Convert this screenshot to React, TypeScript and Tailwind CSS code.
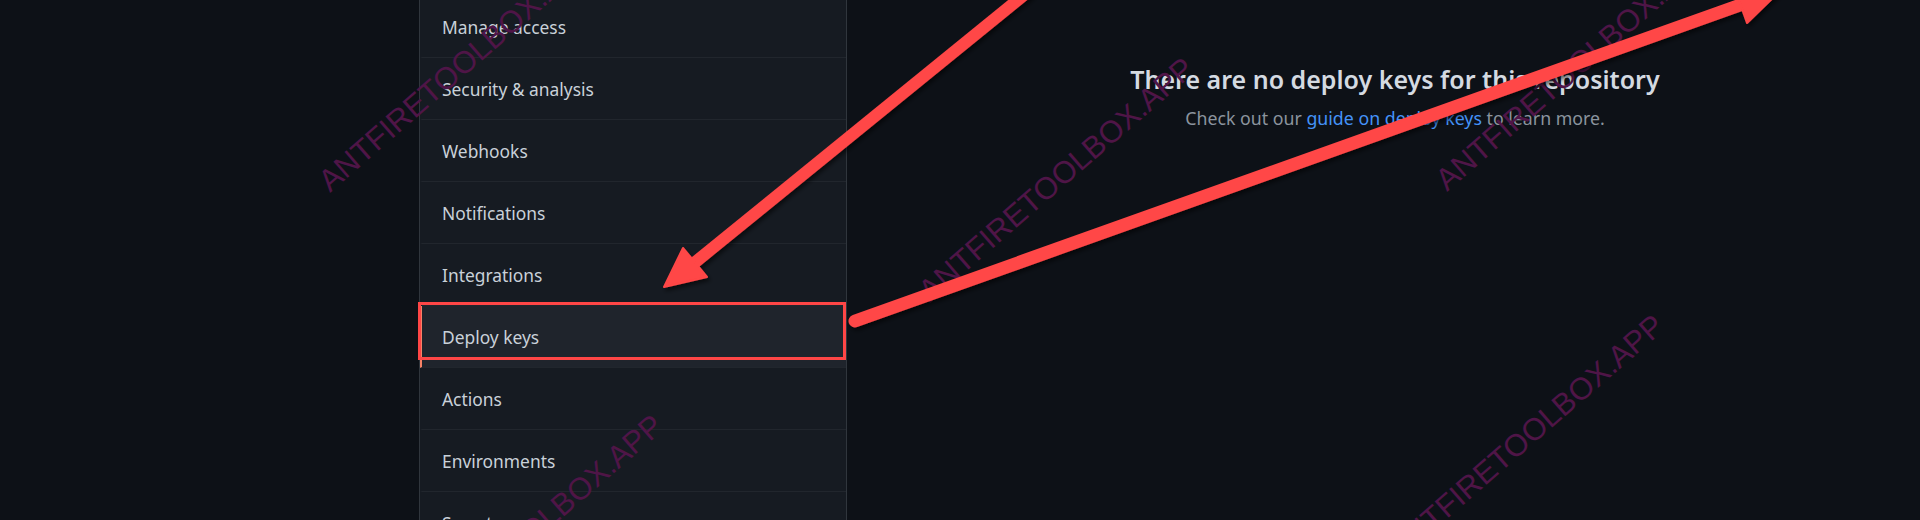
import React from "react";

const items = [
  "Manage access",
  "Security & analysis",
  "Webhooks",
  "Notifications",
  "Integrations",
  "Deploy keys",
  "Actions",
  "Environments",
  "Secrets",
];

function Watermark({ className }: { className: string }) {
  return (
    <span
      className={`pointer-events-none absolute whitespace-nowrap font-['Liberation_Sans',Arial,sans-serif] text-[31px] leading-none text-[#4f1547] origin-[0_26px] -rotate-[41deg] ${className}`}
    >
      ANTFIRETOOLBOX.APP
    </span>
  );
}

export default function App() {
  return (
    <div className="relative flex h-[520px] w-[1920px] overflow-hidden bg-[#0d1117] font-['Noto_Sans',sans-serif]">
      <div className="w-[419px] shrink-0" />
      <nav className="flex w-[428px] shrink-0 flex-col border-x border-[#30363d] bg-[#161b22]">
        <div className="-mt-[4px] flex flex-col">
          {items.map((label) => {
            const selected = label === "Deploy keys";
            return (
              <div
                key={label}
                className={`flex h-[62px] shrink-0 items-center border-b border-b-[#21262d] border-l-2 pl-[20px] text-[17.4px] leading-[24px] text-[#c9d1d9] ${
                  selected ? "border-l-[#f78166] bg-[#1f242c]" : "border-l-transparent"
                }`}
              >
                {label}
              </div>
            );
          })}
        </div>
      </nav>
      <main className="flex flex-1 flex-col items-center pl-[23px] pt-[63px]">
        <h2 className="text-[25px] font-semibold leading-[32px] text-[#d4dae1]">
          There are no deploy keys for this repository
        </h2>
        <p className="mt-[11px] text-[17.75px] leading-[24px] text-[#8b949e]">
          Check out our <span className="text-[#4493f8]">guide on deploy keys</span> to learn more.
        </p>
      </main>

      <Watermark className="left-[330px] top-[167px]" />
      <Watermark className="left-[930px] top-[277px]" />
      <Watermark className="left-[1447px] top-[166px]" />
      <Watermark className="left-[1400px] top-[534px]" />
      <Watermark className="left-[399px] top-[634px]" />

      <div className="pointer-events-none absolute left-[418px] top-[302px] h-[58px] w-[428px] border-[3px] border-[#ff4646]" />

      <svg
        className="pointer-events-none absolute left-0 top-0"
        width="1920"
        height="520"
        viewBox="0 0 1920 520"
      >
        <defs>
          <filter id="sh" x="-10%" y="-10%" width="120%" height="120%">
            <feDropShadow dx="2" dy="3" stdDeviation="2" floodColor="#000" floodOpacity="0.55" />
          </filter>
        </defs>
        <g filter="url(#sh)" fill="#ff4646" stroke="#ff4646">
          <line x1="1030" y1="-10" x2="693" y2="264" strokeWidth="12" />
          <polygon points="664,287 683,248 707,277" strokeWidth="2" strokeLinejoin="round" />
          <line x1="855" y1="321" x2="1743" y2="4" strokeWidth="13" strokeLinecap="round" />
          <polygon points="1780,-9 1747,23 1734,-14" strokeWidth="2" strokeLinejoin="round" />
        </g>
      </svg>
    </div>
  );
}
